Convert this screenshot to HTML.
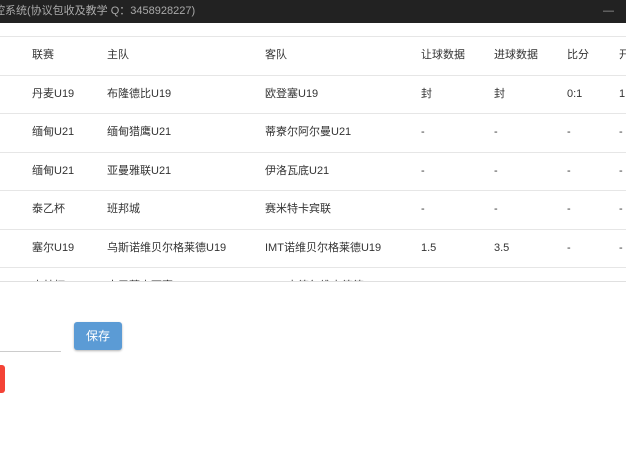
<!DOCTYPE html>
<html><head><meta charset="utf-8"><style>
*{margin:0;padding:0;box-sizing:border-box}
body{width:626px;height:470px;background:#fff;position:relative;overflow:hidden;font-family:"Liberation Sans","Noto Sans CJK SC",sans-serif;font-size:11px;color:#333}
.title{position:absolute;left:0;top:0;width:626px;height:23px;background:#222;color:#aaa;font-size:11px;line-height:23px;overflow:hidden}
.title .t{position:absolute;left:-6px;top:0}
.min{position:absolute;right:12px;top:0;color:#999}
.tbl{position:absolute;left:0;top:36px;width:626px;height:246px;overflow:hidden;border-top:1px solid #e6e6e6;border-bottom:1px solid #e0e0e0}
.row{position:relative;height:38.5px;border-bottom:1px solid #e6e6e6}
.row span{position:absolute;top:0;line-height:37px;white-space:nowrap}
.btn{position:absolute;left:74px;top:322px;width:48px;height:28px;background:#5b9bd5;color:#fff;border-radius:3px;text-align:center;line-height:28px;font-size:12px;box-shadow:0 1px 2px rgba(0,0,0,.3)}
.line{position:absolute;left:0;top:351px;width:61px;height:1px;background:#ccc}
.red{position:absolute;left:-4px;top:365px;width:9px;height:28px;background:#f44336;border-radius:3px}
</style></head><body>
<div class="title"><span class="t">控系统(协议包收及教学 Q：3458928227)</span><span class="min">—</span></div>
<div class="tbl">
<div class="row"><span style="left:32px">联赛</span><span style="left:107px">主队</span><span style="left:265px">客队</span><span style="left:421px">让球数据</span><span style="left:494px">进球数据</span><span style="left:567px">比分</span><span style="left:619px">开</span></div>
<div class="row"><span style="left:32px">丹麦U19</span><span style="left:107px">布隆德比U19</span><span style="left:265px">欧登塞U19</span><span style="left:421px">封</span><span style="left:494px">封</span><span style="left:567px">0:1</span><span style="left:619px">1</span></div>
<div class="row"><span style="left:32px">缅甸U21</span><span style="left:107px">缅甸猎鹰U21</span><span style="left:265px">蒂寮尔阿尔曼U21</span><span style="left:421px">-</span><span style="left:494px">-</span><span style="left:567px">-</span><span style="left:619px">-</span></div>
<div class="row"><span style="left:32px">缅甸U21</span><span style="left:107px">亚曼雅联U21</span><span style="left:265px">伊洛瓦底U21</span><span style="left:421px">-</span><span style="left:494px">-</span><span style="left:567px">-</span><span style="left:619px">-</span></div>
<div class="row"><span style="left:32px">泰乙杯</span><span style="left:107px">班邦城</span><span style="left:265px">赛米特卡宾联</span><span style="left:421px">-</span><span style="left:494px">-</span><span style="left:567px">-</span><span style="left:619px">-</span></div>
<div class="row"><span style="left:32px">塞尔U19</span><span style="left:107px">乌斯诺维贝尔格莱德U19</span><span style="left:265px">IMT诺维贝尔格莱德U19</span><span style="left:421px">1.5</span><span style="left:494px">3.5</span><span style="left:567px">-</span><span style="left:619px">-</span></div>
<div class="row"><span style="left:32px">森林杯</span><span style="left:107px">南巴蒂森西赛</span><span style="left:265px">IMT 森德尔维森德德</span></div>
</div>
<div class="line"></div>
<div class="btn">保存</div>
<div class="red"></div>
</body></html>
